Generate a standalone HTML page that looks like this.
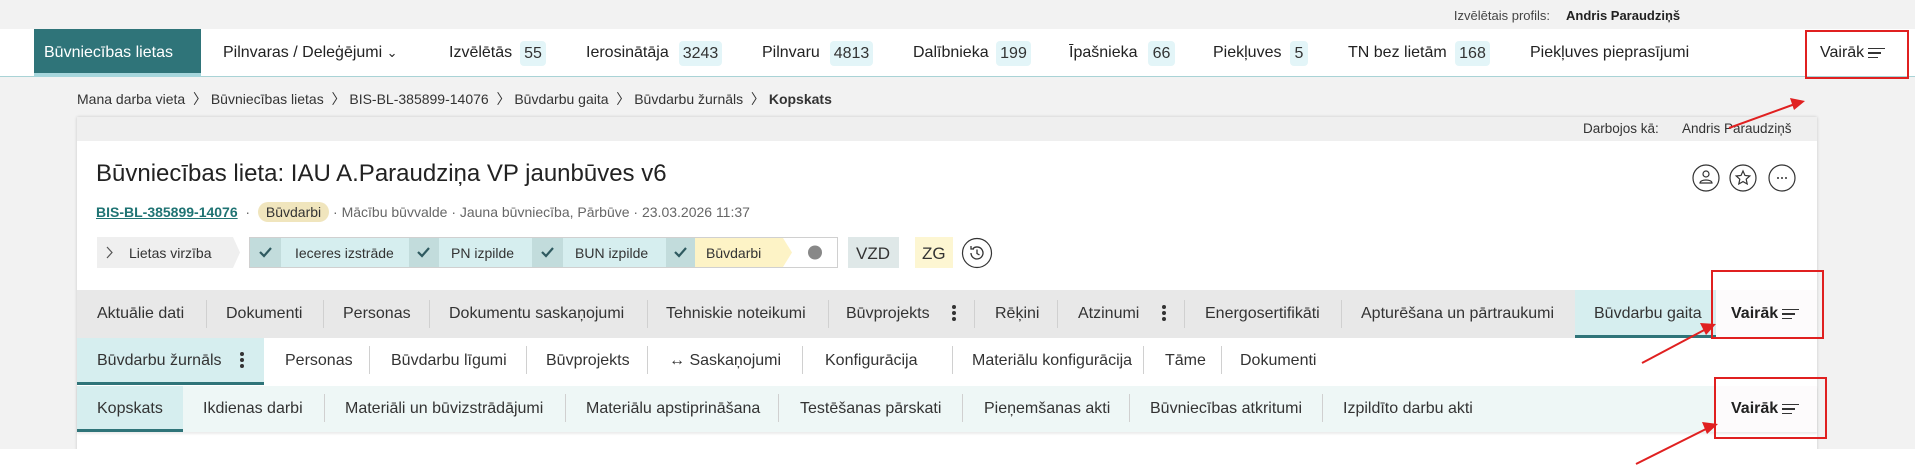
<!DOCTYPE html>
<html><head><meta charset="utf-8"><style>
*{margin:0;padding:0;box-sizing:border-box}
body{width:1915px;height:465px;overflow:hidden;background:#f2f2f2;font-family:"Liberation Sans",Arial,sans-serif;color:#2b2b2b;position:relative}
.a{position:absolute;white-space:nowrap}
.nav{font-size:16px;top:44px;color:#222}
.bd{position:absolute;top:41px;height:25px;background:#e3f5f8;border-radius:4px;font-size:16px;line-height:25px;text-align:center;color:#333}
.t{position:absolute;font-size:16px;color:#333;white-space:nowrap}
.sep{position:absolute;width:1px;background:#d0d0d0}
.dots{position:absolute;width:4px}
.dots i{display:block;width:4px;height:4px;border-radius:2px;background:#333;margin-bottom:2px}
.red{position:absolute;border:2px solid #e02020}
.ham{display:inline-block;width:17px;vertical-align:middle;margin-left:4px}
.ham i{display:block;height:1.5px;background:#333;margin:3px 0}
</style></head><body>
<!-- top bar -->
<div class="a" style="right:365px;top:8px;font-size:13px;color:#444">Izvēlētais profils:</div>
<div class="a" style="left:1566px;top:8px;font-size:13px;font-weight:bold;color:#222">Andris Paraudziņš</div>
<!-- nav -->
<div class="a" style="left:0;top:29px;width:1915px;height:48px;background:#fff;border-bottom:1px solid #a9d3d6"></div>
<div class="a" style="left:34px;top:29px;width:167px;height:48px;background:#2f7479;border-bottom:4px solid #a6d6dc"></div>
<div class="a nav" style="left:44px;color:#fff">Būvniecības lietas</div>
<div class="a nav" style="left:223px">Pilnvaras / Deleģējumi <span style="font-size:13px">&#8964;</span></div>
<div class="a nav" style="left:449px">Izvēlētās</div><div class="bd" style="left:520px;width:26px">55</div>
<div class="a nav" style="left:586px">Ierosinātāja</div><div class="bd" style="left:679px;width:43px">3243</div>
<div class="a nav" style="left:762px">Pilnvaru</div><div class="bd" style="left:830px;width:43px">4813</div>
<div class="a nav" style="left:913px">Dalībnieka</div><div class="bd" style="left:996px;width:35px">199</div>
<div class="a nav" style="left:1069px">Īpašnieka</div><div class="bd" style="left:1148px;width:27px">66</div>
<div class="a nav" style="left:1213px">Piekļuves</div><div class="bd" style="left:1290px;width:18px">5</div>
<div class="a nav" style="left:1348px">TN bez lietām</div><div class="bd" style="left:1455px;width:35px">168</div>
<div class="a nav" style="left:1530px">Piekļuves pieprasījumi</div>
<div class="a nav" style="left:1820px">Vairāk<span class="ham"><i></i><i style="width:13px"></i><i style="width:10px"></i></span></div>
<div class="red" style="left:1805px;top:30px;width:104px;height:49px"></div>
<!-- breadcrumb -->
<div class="a" style="left:77px;top:89px;font-size:14px;color:#333">Mana darba vieta &nbsp;〉 Būvniecības lietas &nbsp;〉 BIS-BL-385899-14076 &nbsp;〉 Būvdarbu gaita &nbsp;〉 Būvdarbu žurnāls &nbsp;〉 <b>Kopskats</b></div>
<!-- card -->
<div class="a" style="left:77px;top:117px;width:1740px;height:348px;background:#fff;box-shadow:0 0 3px rgba(0,0,0,.18)"></div>
<div class="a" style="left:77px;top:117px;width:1740px;height:24px;background:#efefef"></div>
<div class="a" style="left:1583px;top:121px;font-size:13.5px;color:#333">Darbojos kā:</div>
<div class="a" style="left:1682px;top:121px;font-size:13.5px;color:#333">Andris Paraudziņš</div>
<div class="a" style="left:96px;top:160px;font-size:24px;color:#222">Būvniecības lieta: IAU A.Paraudziņa VP jaunbūves v6</div>
<div class="a" style="left:96px;top:204px;font-size:14px;color:#666"><b style="color:#1f7373;text-decoration:underline">BIS-BL-385899-14076</b> &nbsp;·&nbsp; <span style="background:#f0e5bd;color:#333;border-radius:12px;padding:2px 8px">Būvdarbi</span> · Mācību būvvalde · Jauna būvniecība, Pārbūve · 23.03.2026 11:37</div>
<!-- circles -->
<svg class="a" style="left:1688px;top:163px" width="112" height="32" fill="none" stroke="#333" stroke-width="1.2">
<circle cx="18" cy="15" r="13"/><circle cx="55" cy="15" r="13"/><circle cx="94" cy="15" r="13"/>
<circle cx="18" cy="11" r="3"/><path d="M12 20c0-4 12-4 12 0z"/>
<path d="M55 8l2 4.5 4.8.5-3.6 3.2 1 4.8-4.2-2.4-4.2 2.4 1-4.8-3.6-3.2 4.8-.5z"/>
<g fill="#333" stroke="none"><circle cx="90" cy="15" r="1"/><circle cx="94" cy="15" r="1"/><circle cx="98" cy="15" r="1"/></g>
</svg>
<!-- stepper -->
<svg class="a" style="left:95px;top:237px" width="910" height="34">
<polygon points="2,0 138,0 145,15.5 138,31 2,31" fill="#efefef"/>
<path d="M12 10l5 5.5-5 5.5" stroke="#555" fill="none" stroke-width="1.2"/>
<text x="34" y="21" font-size="14" fill="#333" font-family="Liberation Sans">Lietas virzība</text>
<rect x="154.5" y=".5" width="588" height="30" fill="#fff" stroke="#d0d0d0"/>
<rect x="155" y="1" width="31" height="29" fill="#c2dcdc"/><rect x="186" y="1" width="128" height="29" fill="#d6eeef"/>
<rect x="314" y="1" width="30" height="29" fill="#c2dcdc"/><rect x="344" y="1" width="93" height="29" fill="#d6eeef"/>
<rect x="437" y="1" width="31" height="29" fill="#c2dcdc"/><rect x="468" y="1" width="103" height="29" fill="#d6eeef"/>
<rect x="571" y="1" width="29" height="29" fill="#c2dcdc"/><polygon points="600,1 688,1 697,15.5 688,30 600,30" fill="#fdf3c6"/>
<circle cx="720" cy="15.5" r="7" fill="#888"/>
<g stroke="#2f5a60" stroke-width="2.2" fill="none"><path d="M165 15l4 4 7-8"/><path d="M323 15l4 4 7-8"/><path d="M447 15l4 4 7-8"/><path d="M580 15l4 4 7-8"/></g>
<g font-size="14" fill="#333" font-family="Liberation Sans"><text x="200" y="21">Ieceres izstrāde</text><text x="356" y="21">PN izpilde</text><text x="480" y="21">BUN izpilde</text><text x="611" y="21">Būvdarbi</text></g>
<rect x="753" y="0" width="51" height="31" fill="#dfe8e8"/><text x="761" y="22" font-size="17" fill="#333" font-family="Liberation Sans">VZD</text>
<rect x="820" y="0" width="38" height="31" fill="#fdf6d2"/><text x="827" y="22" font-size="17" fill="#333" font-family="Liberation Sans">ZG</text>
<circle cx="882" cy="16" r="14.5" fill="none" stroke="#333" stroke-width="1.2"/>
<g fill="none" stroke="#333" stroke-width="1.3" transform="translate(872,6)"><path d="M4 10a6 6 0 1 0 2-4.5M4 3v3h3M10 6.5v4l2.5 1.5"/></g>
</svg>
<!-- row1 -->
<div class="a" style="left:77px;top:290px;width:1740px;height:48px;background:#e8e8e8"></div>
<div class="a" style="left:1575px;top:290px;width:141px;height:48px;background:#d6eeef;border-bottom:3px solid #2f7479"></div>
<div class="a" style="left:1716px;top:290px;width:101px;height:48px;background:#fdfbfc"></div>
<div class="t" style="left:97px;top:305px">Aktuālie dati</div><div class="sep" style="left:206px;top:300px;height:28px"></div>
<div class="t" style="left:226px;top:305px">Dokumenti</div><div class="sep" style="left:323px;top:300px;height:28px"></div>
<div class="t" style="left:343px;top:305px">Personas</div><div class="sep" style="left:429px;top:300px;height:28px"></div>
<div class="t" style="left:449px;top:305px">Dokumentu saskaņojumi</div><div class="sep" style="left:647px;top:300px;height:28px"></div>
<div class="t" style="left:666px;top:305px">Tehniskie noteikumi</div><div class="sep" style="left:828px;top:300px;height:28px"></div>
<div class="t" style="left:846px;top:305px">Būvprojekts</div><div class="dots" style="left:952px;top:305px"><i></i><i></i><i></i></div><div class="sep" style="left:974px;top:300px;height:28px"></div>
<div class="t" style="left:995px;top:305px">Rēķini</div><div class="sep" style="left:1057px;top:300px;height:28px"></div>
<div class="t" style="left:1078px;top:305px">Atzinumi</div><div class="dots" style="left:1162px;top:305px"><i></i><i></i><i></i></div><div class="sep" style="left:1184px;top:300px;height:28px"></div>
<div class="t" style="left:1205px;top:305px">Energosertifikāti</div><div class="sep" style="left:1341px;top:300px;height:28px"></div>
<div class="t" style="left:1361px;top:305px">Apturēšana un pārtraukumi</div>
<div class="t" style="left:1594px;top:305px">Būvdarbu gaita</div>
<div class="t" style="left:1731px;top:305px;font-weight:bold;color:#222">Vairāk<span class="ham"><i></i><i style="width:13px"></i><i style="width:10px"></i></span></div>
<!-- row2 -->
<div class="a" style="left:77px;top:338px;width:187px;height:47px;background:#d6eeef;border-bottom:3px solid #2f7479"></div>
<div class="t" style="left:97px;top:352px">Būvdarbu žurnāls</div><div class="dots" style="left:240px;top:352px"><i></i><i></i><i></i></div>
<div class="t" style="left:285px;top:352px">Personas</div><div class="sep" style="left:369px;top:346px;height:28px"></div>
<div class="t" style="left:391px;top:352px">Būvdarbu līgumi</div><div class="sep" style="left:526px;top:346px;height:28px"></div>
<div class="t" style="left:546px;top:352px">Būvprojekts</div><div class="sep" style="left:647px;top:346px;height:28px"></div>
<div class="t" style="left:669px;top:352px">↔ Saskaņojumi</div><div class="sep" style="left:802px;top:346px;height:28px"></div>
<div class="t" style="left:825px;top:352px">Konfigurācija</div><div class="sep" style="left:952px;top:346px;height:28px"></div>
<div class="t" style="left:972px;top:352px">Materiālu konfigurācija</div><div class="sep" style="left:1143px;top:346px;height:28px"></div>
<div class="t" style="left:1165px;top:352px">Tāme</div><div class="sep" style="left:1221px;top:346px;height:28px"></div>
<div class="t" style="left:1240px;top:352px">Dokumenti</div>
<!-- row3 -->
<div class="a" style="left:77px;top:386px;width:1740px;height:46px;background:#eef7f6;box-shadow:0 2px 2px rgba(0,0,0,.08)"></div>
<div class="a" style="left:77px;top:386px;width:106px;height:46px;background:#d6eeef;border-bottom:3px solid #2f7479"></div>
<div class="a" style="left:1716px;top:386px;width:101px;height:46px;background:#fdfbfc"></div>
<div class="t" style="left:97px;top:400px">Kopskats</div>
<div class="t" style="left:203px;top:400px">Ikdienas darbi</div><div class="sep" style="left:324px;top:394px;height:28px"></div>
<div class="t" style="left:345px;top:400px">Materiāli un būvizstrādājumi</div><div class="sep" style="left:565px;top:394px;height:28px"></div>
<div class="t" style="left:586px;top:400px">Materiālu apstiprināšana</div><div class="sep" style="left:778px;top:394px;height:28px"></div>
<div class="t" style="left:800px;top:400px">Testēšanas pārskati</div><div class="sep" style="left:962px;top:394px;height:28px"></div>
<div class="t" style="left:984px;top:400px">Pieņemšanas akti</div><div class="sep" style="left:1129px;top:394px;height:28px"></div>
<div class="t" style="left:1150px;top:400px">Būvniecības atkritumi</div><div class="sep" style="left:1322px;top:394px;height:28px"></div>
<div class="t" style="left:1343px;top:400px">Izpildīto darbu akti</div>
<div class="t" style="left:1731px;top:400px;font-weight:bold;color:#222">Vairāk<span class="ham"><i></i><i style="width:13px"></i><i style="width:10px"></i></span></div>
<div class="a" style="left:0;top:449px;width:77px;height:16px;background:#fff"></div>
<div class="a" style="left:1817px;top:449px;width:98px;height:16px;background:#fff"></div>
<!-- red boxes -->
<div class="red" style="left:1711px;top:270px;width:113px;height:69px"></div>
<div class="red" style="left:1714px;top:377px;width:113px;height:62px"></div>
<svg class="a" style="left:0;top:0" width="1915" height="465" fill="#e02020" stroke="#e02020" stroke-width="2">
<line x1="1729" y1="128" x2="1795" y2="104"/><polygon points="1805,101 1790,98 1794,110" stroke="none"/>
<line x1="1642" y1="363" x2="1708" y2="328"/><polygon points="1716,324 1700,323 1706,335" stroke="none"/>
<line x1="1636" y1="464" x2="1708" y2="428"/><polygon points="1718,424 1702,422 1707,434" stroke="none"/>
</svg>
</body></html>
